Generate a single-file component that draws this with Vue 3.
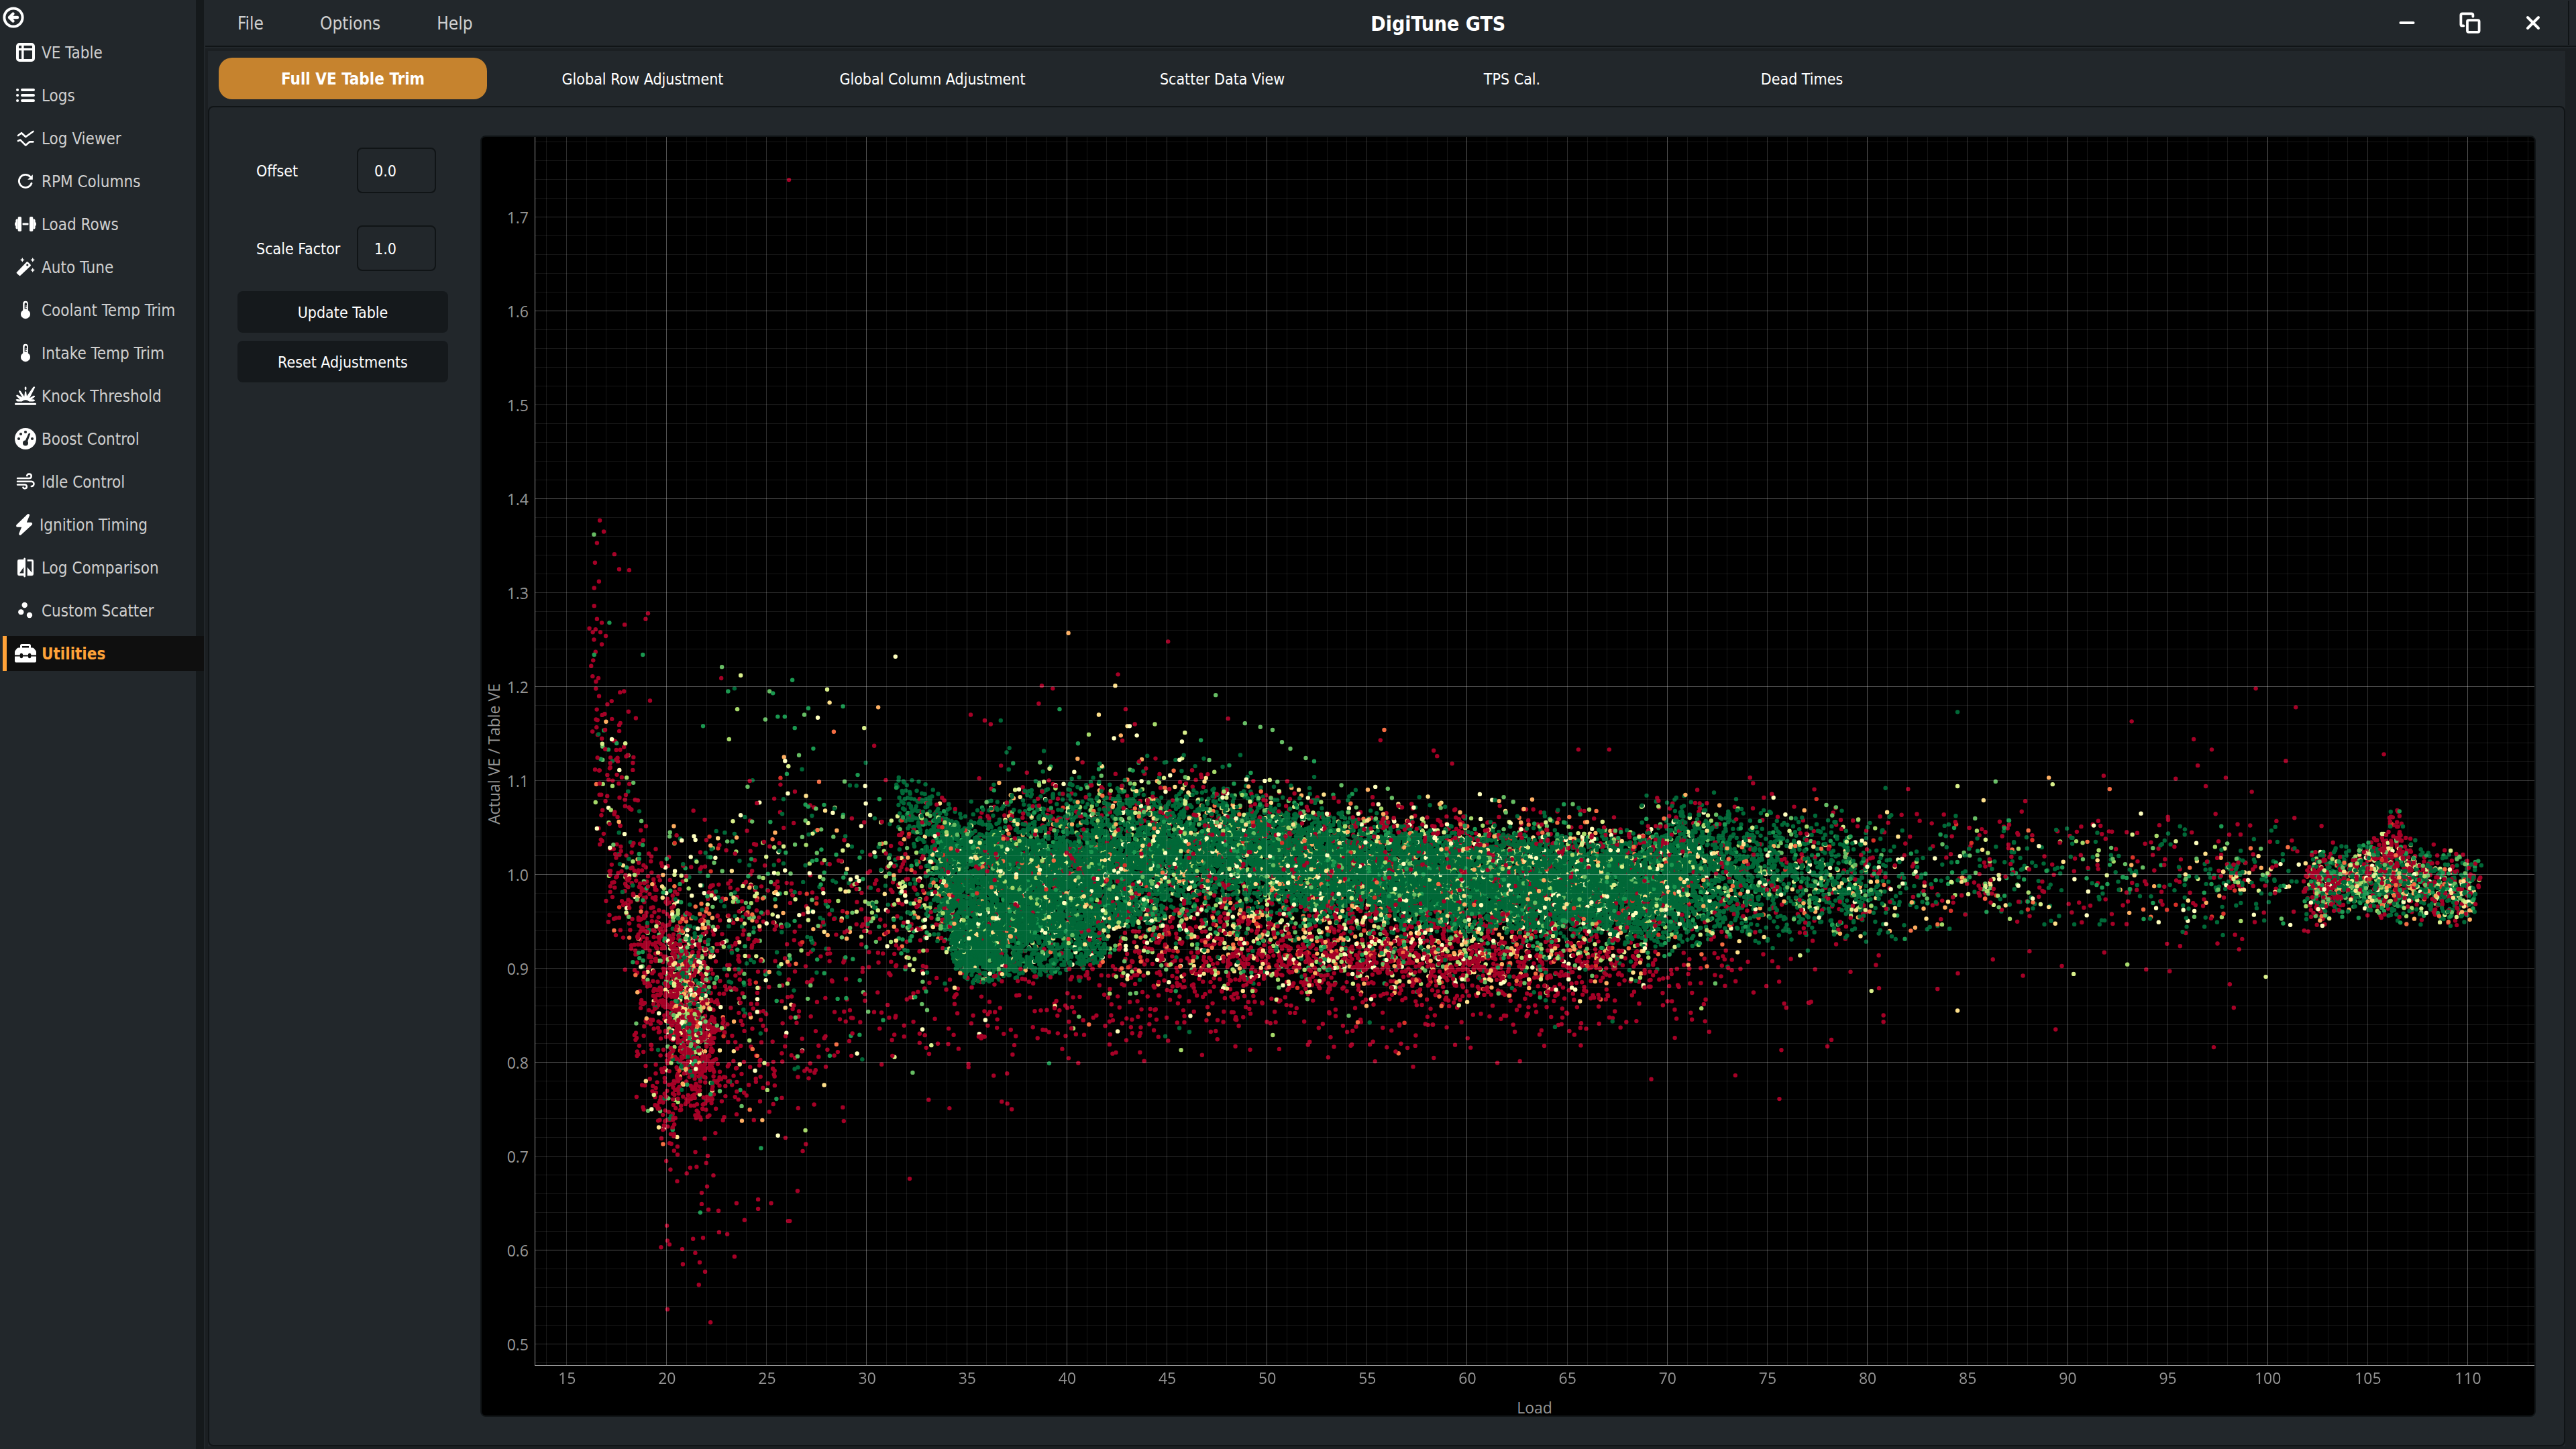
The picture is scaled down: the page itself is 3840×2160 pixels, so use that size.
<script setup>
import { onBeforeUnmount, onMounted, ref } from 'vue'

const navItems = [
  { id: 've', label: 'VE Table' },
  { id: 'logs', label: 'Logs' },
  { id: 'viewer', label: 'Log Viewer' },
  { id: 'rpm', label: 'RPM Columns' },
  { id: 'load', label: 'Load Rows' },
  { id: 'auto', label: 'Auto Tune' },
  { id: 'temp', label: 'Coolant Temp Trim' },
  { id: 'temp', label: 'Intake Temp Trim' },
  { id: 'knock', label: 'Knock Threshold' },
  { id: 'boost', label: 'Boost Control' },
  { id: 'idle', label: 'Idle Control' },
  { id: 'ignition', label: 'Ignition Timing' },
  { id: 'compare', label: 'Log Comparison' },
  { id: 'scatter', label: 'Custom Scatter' },
  { id: 'tools', label: 'Utilities' },
]
const activeNav = ref('Utilities')

const menus = ['File', 'Options', 'Help']
const tabs = [
  'Full VE Table Trim',
  'Global Row Adjustment',
  'Global Column Adjustment',
  'Scatter Data View',
  'TPS Cal.',
  'Dead Times',
]
const activeTab = ref(tabs[0])

const offset = ref('0.0')
const scaleFactor = ref('1.0')
function resetAdjustments() {
  offset.value = '0.0'
  scaleFactor.value = '1.0'
}

/* ---- axes ---- */
const X_MIN = 13.45
const X_MAX = 113.32
const Y_MIN = 0.4775
const Y_MAX = 1.7854
const px = (load) => ((load - X_MIN) / (X_MAX - X_MIN)) * 100
const py = (ve) => ((Y_MAX - ve) / (Y_MAX - Y_MIN)) * 100

const xTicks = Array.from({ length: 20 }, (_, i) => 15 + i * 5)
const yTicks = Array.from({ length: 13 }, (_, i) => (5 + i) / 10)

const xGrid = []
for (let v = 14; v <= 113; v++) {
  xGrid.push({ at: px(v), level: v % 10 === 0 ? 'major' : v % 5 === 0 ? 'mid' : 'minor' })
}
const yGrid = []
for (let v = 48; v <= 178; v += 2) {
  yGrid.push({ at: py(v / 100), level: v % 20 === 0 ? 'major' : v % 10 === 0 ? 'mid' : 'minor' })
}

/* ---- samples ---- */
const PALETTE = [
  '#a50026', '#d73027', '#f46d43', '#fdae61', '#fee08b', '#ffffbf',
  '#d9ef8b', '#a6d96a', '#66bd63', '#1a9850', '#006837',
]
const MIX = {
  red: [34, 0.2, 0.3, 0.4, 0.3, 0.3, 0.2, 0.3, 0.3, 0.4, 0.5],
  reddish: [24, 0.4, 0.6, 0.8, 0.7, 0.7, 0.6, 0.8, 1, 1.6, 1.4],
  warm: [14, 0.7, 1.1, 1.6, 1.6, 1.8, 1.2, 1.1, 1, 0.8, 1],
  mixed: [8, 0.5, 0.8, 1.1, 1.3, 2, 1.3, 1.5, 1.7, 2.2, 5],
  leafy: [3, 0.2, 0.4, 0.6, 0.9, 1.4, 1.7, 2.4, 3, 4, 6],
  half: [7, 0.3, 0.5, 0.7, 0.8, 0.8, 0.7, 0.9, 1, 2, 10],
  green: [0.7, 0.1, 0.15, 0.2, 0.4, 0.7, 0.3, 0.4, 0.6, 1.2, 36],
}

let seed = 20177
function random() {
  seed = (seed + 0x6d2b79f5) | 0
  let t = Math.imul(seed ^ (seed >>> 15), 1 | seed)
  t = (t + Math.imul(t ^ (t >>> 7), 61 | t)) ^ t
  return ((t ^ (t >>> 14)) >>> 0) / 4294967296
}
function pick(weights) {
  let r = random() * weights.reduce((a, b) => a + b, 0)
  for (let i = 0; i < weights.length; i++) {
    r -= weights[i]
    if (r <= 0) return i
  }
  return 0
}
const jitter = (size) => (random() + random() - 1) * size

// knots: [load, lowest VE, highest VE, density]; spread 1 is even, higher gathers to the middle,
// 'top' and 'bottom' gather to that edge
const LAYERS = [
  [42, 1, 'reddish', [[16.3, 1.08, 1.22, 1], [17, 1.08, 1.2, 1], [18.2, 1.06, 1.18, 0.8]]],
  [95, 1, 'reddish', [[16.4, 1.04, 1.18, 0.8], [17.3, 1.0, 1.17, 2], [18.4, 0.98, 1.13, 1.4], [19.2, 0.98, 1.06, 0.8]]],
  [310, 2, 'reddish', [[17, 0.93, 1.06, 0.3], [17.8, 0.9, 1.05, 1], [19, 0.84, 1.03, 2], [20.5, 0.82, 1.05, 2]]],
  [210, 1, 'red', [[18.4, 0.78, 0.92, 0.4], [19, 0.75, 0.93, 1], [20.5, 0.7, 0.95, 2]]],
  [620, 2, 'mixed', [[20.2, 0.78, 0.98, 1], [20.8, 0.77, 1.0, 3], [21.4, 0.76, 0.98, 3], [22.2, 0.8, 0.98, 0.6]]],
  [480, 2, 'red', [[20, 0.72, 0.98, 1], [20.7, 0.74, 0.95, 2], [21.5, 0.73, 0.91, 2.4], [22.6, 0.72, 0.9, 0.5]]],
  [100, 'top', 'red', [[19.5, 0.67, 0.76, 1], [21, 0.65, 0.76, 2], [24, 0.66, 0.8, 1], [29, 0.7, 0.82, 0.4]]],
  [400, 1, 'reddish', [[22, 0.77, 1.0, 1.6], [25, 0.77, 1.0, 1.2], [28, 0.8, 0.98, 0.7], [33, 0.8, 0.98, 0.6]]],
  [240, 2, 'mixed', [[20, 0.95, 1.08, 0.7], [24.5, 0.8, 1.12, 2], [26, 0.86, 1.14, 1], [28, 0.88, 1.12, 0.8]]],
  [130, 1, 'leafy', [[22, 0.88, 1.06, 0.6], [25, 0.88, 1.14, 1], [29, 0.94, 1.13, 1], [32, 0.95, 1.11, 0.8]]],
  [430, 2, 'mixed', [[27, 0.9, 1.08, 0.3], [30, 0.9, 1.09, 0.6], [32, 0.88, 1.09, 1.4], [34.5, 0.88, 1.08, 3]]],
  [230, 2, 'green', [[31.6, 1.05, 1.11, 0.6], [32.6, 1.01, 1.1, 1.6], [34.2, 0.99, 1.08, 2]]],
  [4300, 1, 'green', [[33.5, 0.96, 1.03, 0.6], [34.1, 0.93, 1.055, 3], [35, 0.895, 1.045, 4], [37, 0.93, 1.035, 4], [40, 0.94, 1.03, 3], [42, 0.945, 1.03, 1.6], [45, 0.95, 1.04, 0.8]]],
  [1150, 1, 'green', [[34.3, 0.91, 0.95, 2], [35, 0.888, 0.94, 3], [37, 0.892, 0.95, 2.4], [40, 0.897, 0.95, 2], [42, 0.91, 0.95, 1]]],
  [1350, 2, 'green', [[34, 1.0, 1.08, 0.8], [40, 0.99, 1.11, 2], [44, 0.97, 1.1, 2], [49, 0.98, 1.11, 2], [54, 0.98, 1.09, 1]]],
  [9800, 2, 'green', [[41, 0.95, 1.08, 0.9], [46, 0.96, 1.08, 1.5], [50, 0.955, 1.075, 2.4], [55, 0.945, 1.06, 3.4], [60, 0.935, 1.05, 3.6], [65, 0.93, 1.045, 3.8], [69, 0.925, 1.045, 3.2], [71, 0.925, 1.07, 1.4]]],
  [2500, 3, 'mixed', [[35, 0.87, 1.11, 0.6], [40, 0.87, 1.12, 1.1], [45, 0.86, 1.12, 1.5], [55, 0.87, 1.1, 1.5], [65, 0.87, 1.09, 1.3], [70, 0.88, 1.09, 0.9]]],
  [1450, 2, 'warm', [[42, 0.87, 0.98, 0.6], [48, 0.865, 0.985, 1.4], [56, 0.865, 0.97, 1.8], [64, 0.86, 0.96, 1.4], [69, 0.87, 0.96, 0.7]]],
  [760, 'top', 'red', [[33, 0.8, 0.9, 0.4], [40, 0.81, 0.9, 0.7], [50, 0.82, 0.92, 1.4], [60, 0.82, 0.92, 1.4], [66, 0.82, 0.91, 0.9], [74, 0.82, 0.92, 0.3]]],
  [100, 'top', 'red', [[31, 0.77, 0.84, 1], [50, 0.79, 0.84, 0.9], [68, 0.8, 0.85, 0.5]]],
  [620, 'bottom', 'warm', [[35, 1.05, 1.12, 0.4], [45, 1.05, 1.13, 0.8], [55, 1.03, 1.09, 1.2], [64, 1.02, 1.075, 1.4], [70, 1.03, 1.07, 0.6]]],
  [190, 'bottom', 'leafy', [[37, 1.06, 1.15, 1], [46, 1.07, 1.15, 1], [54, 1.04, 1.12, 0.6], [66, 1.03, 1.08, 0.5]]],
  [1500, 2, 'green', [[70, 0.92, 1.085, 3.4], [73, 0.92, 1.08, 2], [77, 0.92, 1.07, 1], [81, 0.93, 1.06, 0.4]]],
  [540, 2, 'mixed', [[69, 0.89, 1.1, 3], [73, 0.9, 1.1, 1.3], [80, 0.91, 1.09, 0.8]]],
  [620, 2, 'half', [[78, 0.92, 1.08, 2], [83, 0.92, 1.07, 1.5], [88, 0.93, 1.07, 1], [93, 0.93, 1.07, 1], [98, 0.93, 1.06, 1.2], [101.5, 0.94, 1.06, 1]]],
  [100, 2, 'mixed', [[79, 0.93, 1.06, 1], [90, 0.94, 1.05, 0.8], [101, 0.93, 1.05, 1.4]]],
  [26, 2, 'mixed', [[97.6, 0.98, 1.02, 1], [98.6, 0.98, 1.02, 1]]],
  [14, 2, 'warm', [[85.7, 0.978, 0.99, 1], [86.3, 0.98, 0.996, 1]]],
  [120, 2, 'reddish', [[101.8, 0.95, 1.03, 0.6], [102.6, 0.945, 1.03, 2], [103.6, 0.95, 1.03, 1]]],
  [1150, 2, 'half', [[101.9, 0.94, 1.02, 0.3], [102.7, 0.945, 1.035, 1.8], [104, 0.96, 1.03, 1.6], [106, 0.95, 1.04, 2.6], [107.5, 0.95, 1.035, 2], [109, 0.945, 1.03, 1.7], [110.1, 0.945, 1.03, 2], [110.5, 0.95, 1.02, 0.4]]],
  [210, 2, 'leafy', [[102.4, 0.955, 1.02, 1], [105.5, 0.95, 1.03, 2], [107.5, 0.95, 1.02, 1], [110.2, 0.945, 1.01, 1]]],
  [100, 2, 'red', [[104.8, 0.99, 1.03, 1], [106.2, 0.99, 1.06, 3], [107.3, 0.99, 1.03, 1]]],
  [34, 1, 'reddish', [[106, 1.03, 1.075, 1], [106.6, 1.03, 1.06, 1]]],
  [46, 1, 'red', [[70, 0.83, 0.92, 1.6], [80, 0.87, 0.92, 0.4], [104, 0.92, 0.95, 0.2]]],
  [34, 'bottom', 'red', [[70, 1.06, 1.1, 1], [90, 1.04, 1.08, 0.7], [104, 1.03, 1.07, 0.8]]],
]

// isolated readings, by palette index: load, VE, load, VE, ...
const OUTLIERS = {
  0: [
    16.67, 1.377, 16.87, 1.365, 16.53, 1.353, 16.43, 1.332, 17.4, 1.341, 17.64, 1.325, 18.14, 1.324,
    16.63, 1.312, 16.39, 1.305, 16.39, 1.286, 16.53, 1.272, 16.77, 1.268, 16.15, 1.262, 16.32, 1.258,
    16.46, 1.261, 16.7, 1.258, 16.97, 1.254, 16.38, 1.25, 16.77, 1.245, 16.46, 1.237, 16.34, 1.228,
    16.24, 1.222, 16.31, 1.211, 16.6, 1.209, 17.91, 1.266, 18.96, 1.272, 19.08, 1.278, 17.88, 1.195,
    19.18, 1.185, 22.74, 1.209, 30.38, 1.137, 26.12, 1.7396, 32.15, 0.676, 21.76, 0.661, 21.76, 0.649,
    22.1, 0.643, 22.6, 0.642, 23.5, 0.65, 24.58, 0.654, 24.58, 0.644, 25.23, 0.65, 26.55, 0.663,
    26.08, 0.631, 26.16, 0.631, 23.9, 0.632, 20.02, 0.626, 20.05, 0.61, 20.15, 0.606, 19.73, 0.603,
    20.79, 0.601, 21.33, 0.612, 21.83, 0.613, 22.63, 0.619, 23.04, 0.617, 21.44, 0.597, 21.66, 0.587,
    20.82, 0.585, 23.4, 0.593, 21.93, 0.577, 21.62, 0.563, 20.05, 0.537, 22.2, 0.523,
    45.06, 1.248, 42.56, 1.213, 38.75, 1.201, 39.3, 1.198, 38.6, 1.182, 42.94, 1.176, 48.06, 1.166,
    35.2, 1.17, 35.9, 1.164, 36.2, 1.16, 43.4, 1.16, 55.67, 1.143, 58.33, 1.132, 58.5, 1.126,
    59.25, 1.118, 65.56, 1.133, 67.1, 1.133, 71.5, 1.09, 37.25, 0.75, 37.03, 0.756, 36.75, 0.758,
    34.14, 0.751, 33.1, 0.76, 73.4, 0.786, 69.2, 0.782, 55.4, 0.801, 93.2, 1.163, 96.3, 1.144,
    97.2, 1.133, 96.5, 1.116, 99.4, 1.198, 101.4, 1.178, 100.9, 1.121, 105.8, 1.128, 91.8, 1.105,
    95.4, 1.102, 96.9, 1.094, 97.9, 1.103, 99.2, 1.088, 82.03, 1.091, 75.6, 0.761, 97.3, 0.816,
    89.4, 0.835, 98.3, 0.858, 98.1, 0.883, 80.8, 0.85, 80.8, 0.843, 95.1, 0.897, 83.5, 0.878,
    75.7, 0.813, 78, 0.817, 78.2, 0.824,
  ],
  2: [28.36, 1.152, 55.86, 1.154, 92.1, 1.091],
  3: [30.58, 1.178, 40.08, 1.257, 42.7, 1.148, 89.06, 1.103],
  4: [28.15, 1.183, 42.42, 1.201, 41.6, 1.17, 43.03, 1.158, 85.8, 1.079, 84.5, 0.855],
  5: [27.56, 1.167, 31.44, 1.232, 25.57, 0.722, 43.14, 1.158, 42.36, 1.145, 43.5, 1.148],
  6: [23.71, 1.212, 28.03, 1.197, 29.88, 1.156, 45.9, 1.151, 89.25, 1.096, 84.5, 1.094, 80.2, 0.876, 99.9, 0.891, 90.3, 0.894],
  7: [23.54, 1.176, 23.13, 1.144, 44.4, 1.16, 41.1, 1.149],
  8: [16.38, 1.362, 22.77, 1.221, 25.15, 1.195, 26.89, 1.17, 24.94, 1.165, 47.44, 1.191, 48.9, 1.161, 49.67, 1.157, 50.28, 1.154, 50.75, 1.141, 51.17, 1.134, 51.94, 1.124, 32.3, 0.789, 86.4, 1.099],
  9: [17.15, 1.268, 16.39, 1.234, 18.82, 1.234, 23.08, 1.195, 26.29, 1.207, 25.32, 1.193, 28.82, 1.179, 27.09, 1.177, 25.56, 1.168, 25.91, 1.168, 26.41, 1.156, 21.83, 1.158, 39.64, 1.176, 46.7, 1.143, 21.69, 0.64],
  10: [23.4, 1.198, 36.7, 1.164, 84.5, 1.173, 80.9, 1.092],
}

function buildSamples() {
  const samples = []
  for (const [count, spread, mix, knots] of LAYERS) {
    const peak = Math.max(...knots.map((k) => k[3]))
    const first = knots[0][0]
    const last = knots[knots.length - 1][0]
    let made = 0
    while (made < count) {
      const load = first + random() * (last - first)
      const i = Math.max(1, knots.findIndex((k) => k[0] >= load))
      const a = knots[i - 1]
      const b = knots[i]
      const t = (load - a[0]) / (b[0] - a[0])
      const at = (n) => a[n] + (b[n] - a[n]) * t
      if (random() * peak > at(3)) continue
      let u
      if (spread === 'top') u = Math.max(random(), random())
      else if (spread === 'bottom') u = Math.min(random(), random())
      else {
        u = 0
        for (let s = 0; s < spread; s++) u += random() / spread
      }
      const ve = at(1) + (at(2) - at(1)) * u
      samples.push([load + jitter(0.35), ve + jitter(0.01), pick(MIX[mix])])
      made++
    }
  }
  for (let i = samples.length - 1; i > 0; i--) {
    const j = Math.floor(random() * (i + 1))
    ;[samples[i], samples[j]] = [samples[j], samples[i]]
  }
  for (const [color, list] of Object.entries(OUTLIERS)) {
    for (let i = 0; i < list.length; i += 2) samples.push([list[i], list[i + 1], color])
  }
  return samples
}
const samples = buildSamples()

const canvas = ref(null)
let observer
function draw() {
  const el = canvas.value
  const w = (el.width = el.clientWidth)
  const h = (el.height = el.clientHeight)
  const ctx = el.getContext('2d')
  for (const [load, ve, color] of samples) {
    ctx.fillStyle = PALETTE[color]
    ctx.beginPath()
    ctx.arc((px(load) / 100) * w, (py(ve) / 100) * h, 3.2, 0, Math.PI * 2)
    ctx.fill()
  }
}
onMounted(() => {
  draw()
  observer = new ResizeObserver(draw)
  observer.observe(canvas.value)
})
onBeforeUnmount(() => observer.disconnect())
</script>

<template>
  <div class="app">
    <aside class="sidebar">
      <button class="collapse" type="button" aria-label="Collapse sidebar">
        <svg viewBox="0 0 32 32" class="icon line">
          <circle cx="16" cy="16" r="13.6" stroke-width="4" />
          <path d="M10 16H22M15.5 10.5L10 16L15.5 21.5" stroke-width="4.4" />
        </svg>
      </button>
      <nav class="nav">
        <a
          v-for="item in navItems"
          :key="item.label"
          href="#"
          class="nav-item"
          :class="{ active: item.label === activeNav }"
          @click.prevent="activeNav = item.label"
        >
          <svg v-if="item.id === 've'" viewBox="0 0 32 32" class="icon line">
            <rect x="4" y="4" width="24" height="24" rx="3" stroke-width="4" />
            <path d="M4 11.6H28M11.8 4V28" stroke-width="3.4" />
          </svg>
          <svg v-else-if="item.id === 'logs'" viewBox="0 0 32 32" class="icon line">
            <path d="M4 8H4.1M4 16H4.1M4 24H4.1M11 8H28M11 16H28M11 24H28" stroke-width="4" />
          </svg>
          <svg v-else-if="item.id === 'viewer'" viewBox="0 0 32 32" class="icon line">
            <path d="M5 12L10 8.2L16.3 14L27.4 6M5 20L8.3 18.6L16.3 26.6L22.3 21.3H27.4" stroke-width="2.7" />
          </svg>
          <svg v-else-if="item.id === 'rpm'" viewBox="0 0 32 32" class="icon line">
            <path d="M25 19.2A9.6 9.6 0 1 1 23.2 9.6" stroke-width="2.8" />
            <path class="solid" d="M26.8 6.2V13.8H19.2Z" />
          </svg>
          <svg v-else-if="item.id === 'load'" viewBox="0 0 32 32" class="icon">
            <rect x="4.7" y="5" width="5.3" height="22" rx="1.8" />
            <rect x="22" y="5" width="5.3" height="22" rx="1.8" />
            <path d="M4.7 8.6H3.4C2 8.6 1.4 9.6 1.4 11V13Q0 13.4 0 16Q0 18.6 1.4 19V21C1.4 22.4 2 23.4 3.4 23.4H4.7ZM27.3 8.6H28.6C30 8.6 30.6 9.6 30.6 11V13Q32 13.4 32 16Q32 18.6 30.6 19V21C30.6 22.4 30 23.4 28.6 23.4H27.3Z" />
            <rect x="11.5" y="14.6" width="9" height="2.8" rx="1" />
          </svg>
          <svg v-else-if="item.id === 'auto'" viewBox="0 0 32 32" class="icon">
            <path fill-rule="evenodd" d="M2.8 24L17.6 8.6Q18.6 7.8 19.6 8.6L23.6 12.6Q24.4 13.6 23.6 14.6L8.4 28.8Q7.4 29.6 6.4 28.6L2.8 25.2Q2.3 24.6 2.8 24ZM18.8 11.4A1.6 1.6 0 1 0 18.8 14.6A1.6 1.6 0 1 0 18.8 11.4Z" />
            <path d="M11.3 2L12.5 4.4L14.7 5.4L12.5 6.5L11.3 8.8L10.1 6.5L7.9 5.4L10.1 4.4ZM26.7 2L27.9 4.4L30.1 5.4L27.9 6.5L26.7 8.8L25.5 6.5L23.3 5.4L25.5 4.4ZM26.7 17.2L27.9 19.6L30.1 20.6L27.9 21.7L26.7 24L25.5 21.7L23.3 20.6L25.5 19.6Z" />
          </svg>
          <svg v-else-if="item.id === 'temp'" viewBox="0 0 32 32" class="icon">
            <path fill-rule="evenodd" d="M12.2 6.5A3.8 3.8 0 0 1 19.8 6.5V16.4A7 7 0 1 1 12.2 16.4ZM14.6 7V14.6H18V13.2H16V12H18V10.8H16V9.4H18V7A1.7 1.7 0 0 0 14.6 7Z" />
          </svg>
          <svg v-else-if="item.id === 'knock'" viewBox="0 0 32 32" class="icon">
            <rect x="0" y="26.8" width="32" height="3" rx="1.4" />
            <rect x="14.8" y="2.4" width="2.6" height="5" rx="1.3" />
            <path d="M1.6 21.4Q3.4 20.4 7.6 21.6L2.2 16.2Q2.2 14 4.4 14.8L11.2 18.4L6 9.4Q6.6 7 8.8 9L14.2 17L15.2 9.4H17L18 16.4L27.4 3Q29.4 1.4 30.2 3.4L22.2 19.2L28 15.8Q30.6 15.2 30 17.4L25 21.4Q29 21 30.2 22.4Q29.6 24.4 26 24.6H21.6Q16 20 10.6 24.6H6Q2 24.4 1.6 21.4Z" />
          </svg>
          <svg v-else-if="item.id === 'boost'" viewBox="0 0 32 32" class="icon">
            <circle cx="16" cy="16" r="16" />
            <g class="cut">
              <circle cx="16" cy="6" r="2.1" />
              <circle cx="9" cy="9" r="2.1" />
              <circle cx="6" cy="16" r="2.1" />
              <circle cx="26" cy="16" r="2.1" />
              <circle cx="16" cy="22.4" r="4" />
              <path d="M20.4 8.6Q22 7 23.2 8.8L19 20.4L15.6 19Z" />
            </g>
          </svg>
          <svg v-else-if="item.id === 'idle'" viewBox="0 0 32 32" class="icon line">
            <path d="M4 11H21.4A3.3 3.3 0 1 0 18.2 7.2M4 15.8H25A3.6 3.6 0 1 1 24.8 23M4 20.4H15A2.9 2.9 0 1 1 12.4 24.6" stroke-width="2.5" />
          </svg>
          <svg v-else-if="item.id === 'ignition'" viewBox="0 0 29 32" class="icon narrow">
            <path d="M18.4 1Q19.8-.6 21.4.6Q22.4 1.4 22 2.6L17.8 12.8H24.4Q27 13.6 25.8 16.2L10 30.8Q8.6 32.6 6.8 31.4Q5.8 30.4 6.4 29L10.2 19.8H3.8Q1.4 19.2 2.4 16.6Z" />
          </svg>
          <svg v-else-if="item.id === 'compare'" viewBox="0 0 32 32" class="icon">
            <path fill-rule="evenodd" d="M13.3 4V2.4Q14.7.4 16 2.4V29.6Q14.7 31.6 13.3 29.6V28.2H6.4Q4 28.2 4 25.8V6.4Q4 4 6.4 4ZM13.3 15.6L7 24.4H13.3Z" />
            <path fill-rule="evenodd" d="M18.7 4H25.6Q28 4 28 6.4V25.8Q28 28.2 25.6 28.2H18.7V15.6L25.3 23.6V6.8H18.7Z" />
          </svg>
          <svg v-else-if="item.id === 'scatter'" viewBox="0 0 32 32" class="icon">
            <circle cx="14.7" cy="8" r="4.2" />
            <circle cx="9.3" cy="18.4" r="4.2" />
            <circle cx="22" cy="23" r="4.2" />
          </svg>
          <svg v-else viewBox="0 0 32 32" class="icon">
            <path fill-rule="evenodd" d="M8 7.4V4.6Q8 2 10.6 2H21.4Q24 2 24 4.6V7.4H26Q27.6 7.4 28.6 8.6L31.2 11.8Q32 12.8 32 14V18.6H24.2V17Q22 14.6 20 17V18.6H12V17Q10 14.6 7.8 17V18.6H0V14Q0 12.8.8 11.8L3.4 8.6Q4.4 7.4 6 7.4ZM11 7.4H21V5H11Z" />
            <path d="M0 20.6H7.8V22Q10 24.6 12 22V20.6H20V22Q22 24.6 24.2 22V20.6H32V27Q32 29.6 29.4 29.6H2.6Q0 29.6 0 27Z" />
          </svg>
          <span>{{ item.label }}</span>
        </a>
      </nav>
    </aside>

    <div class="main">
      <header class="titlebar">
        <div class="menus">
          <button v-for="menu in menus" :key="menu" type="button" class="menu">{{ menu }}</button>
        </div>
        <h1 class="title">DigiTune GTS</h1>
        <div class="controls">
          <button type="button" class="control" aria-label="Minimize">
            <svg viewBox="0 0 32 32" class="icon line"><path d="M6.5 16H25.5" stroke-width="4" /></svg>
          </button>
          <button type="button" class="control" aria-label="Restore">
            <svg viewBox="0 0 32 32" class="icon line">
              <path d="M20.4 6.6V4.4Q20.4 2.4 18.4 2.4H4.4Q2.4 2.4 2.4 4.4V18.4Q2.4 20.4 4.4 20.4H6.4" stroke-width="3.8" />
              <rect x="12" y="12.2" width="17.6" height="17.6" rx="2" stroke-width="3.8" />
            </svg>
          </button>
          <button type="button" class="control" aria-label="Close">
            <svg viewBox="0 0 32 32" class="icon line"><path d="M8 8L24 24M24 8L8 24" stroke-width="4" /></svg>
          </button>
        </div>
      </header>

      <div class="content">
        <div class="tabs" role="tablist">
          <button
            v-for="tab in tabs"
            :key="tab"
            type="button"
            role="tab"
            class="tab"
            :class="{ active: tab === activeTab }"
            :aria-selected="tab === activeTab"
            @click="activeTab = tab"
          >{{ tab }}</button>
        </div>

        <section class="panel">
          <form class="form" @submit.prevent>
            <div class="fields">
              <div class="field">
                <label for="offset">Offset</label>
                <input id="offset" v-model="offset" type="text" />
              </div>
              <div class="field">
                <label for="scale-factor">Scale Factor</label>
                <input id="scale-factor" v-model="scaleFactor" type="text" />
              </div>
            </div>
            <button type="submit" class="action">Update Table</button>
            <button type="button" class="action" @click="resetAdjustments">Reset Adjustments</button>
          </form>

          <div class="chart">
            <div class="y-title"><span>Actual VE / Table VE</span></div>
            <div class="y-ticks">
              <span v-for="v in yTicks" :key="v" :style="{ top: py(v) + '%' }">{{ v.toFixed(1) }}</span>
            </div>
            <div class="plot">
              <canvas ref="canvas"></canvas>
              <svg class="grid" aria-hidden="true">
                <line v-for="g in xGrid" :key="'x' + g.at" :class="g.level" :x1="g.at + '%'" :x2="g.at + '%'" y1="0" y2="100%" />
                <line v-for="g in yGrid" :key="'y' + g.at" :class="g.level" :y1="g.at + '%'" :y2="g.at + '%'" x1="0" x2="100%" />
              </svg>
            </div>
            <div class="x-ticks">
              <span v-for="v in xTicks" :key="v" :style="{ left: px(v) + '%' }">{{ v }}</span>
            </div>
            <div class="x-title">Load</div>
          </div>
        </section>
      </div>
    </div>
  </div>
</template>

<style>
body {
  margin: 0;
  background: #22272b;
}
</style>

<style scoped>
.app {
  display: flex;
  min-height: 100vh;
  background: #22272b;
  color: #fff;
  font-family: "DejaVu Sans Condensed", "DejaVu Sans", sans-serif;
  font-size: 23px;
  line-height: 28px;
}
button,
input {
  font: inherit;
  color: inherit;
  margin: 0;
  padding: 0;
  border: 0;
  background: none;
  box-sizing: border-box;
}
.icon {
  display: block;
  flex: none;
  width: 32px;
  height: 32px;
  fill: #fff;
}
.icon.narrow {
  width: 29px;
}
.icon.line {
  fill: none;
  stroke: #fff;
  stroke-linecap: round;
  stroke-linejoin: round;
}
.icon .solid {
  fill: #fff;
  stroke: none;
}
.icon .cut {
  fill: #22272b;
}

/* sidebar */
.sidebar {
  flex: none;
  width: 304px;
  box-sizing: border-box;
  padding: 10px 0 0 4px;
  background: linear-gradient(to left, #15191b 12px, transparent 12px);
}
.collapse {
  display: block;
}
.nav {
  display: flex;
  flex-direction: column;
  gap: 12px;
  margin-top: 10px;
}
.nav-item {
  display: flex;
  align-items: center;
  gap: 8px;
  height: 52px;
  box-sizing: border-box;
  padding-left: 12px;
  border-left: 6px solid transparent;
  color: #cfcfcf;
  font-size: 24px;
  text-decoration: none;
  white-space: nowrap;
}
.nav-item span {
  padding-top: 2px;
}
.nav-item.active {
  border-left-color: #ffa238;
  background: #0f0f0f;
  color: #ffa238;
  font-weight: bold;
}

/* title bar */
.main {
  display: flex;
  flex: 1;
  flex-direction: column;
  min-width: 0;
  margin-left: 2px;
}
.titlebar {
  display: flex;
  align-items: center;
  height: 70px;
  box-sizing: border-box;
  padding-right: 10px;
  border-bottom: 2px solid #101416;
}
.menus {
  display: flex;
  gap: 84px;
  padding: 0 42px 0 48px;
  color: #cfcfcf;
}
.menu {
  padding-top: 2px;
  font-size: 26px;
}
.title {
  flex: 1;
  margin: 0;
  padding-top: 4px;
  font-size: 30px;
  line-height: 36px;
  font-weight: bold;
  text-align: center;
}
.controls {
  display: flex;
  padding-right: 5px;
  border-right: 2px solid #101416;
}
.control {
  display: flex;
  align-items: center;
  justify-content: center;
  width: 94px;
  height: 66px;
}

/* tabs and panel */
.content {
  display: flex;
  flex: 1;
  flex-direction: column;
  margin-top: 2px;
  border: solid #1b1f22;
  border-width: 4px 16px 4px 4px;
}
.tabs {
  display: flex;
  gap: 32px;
  padding: 10px 16px;
}
.tab {
  width: 400px;
  height: 62px;
  padding-top: 2px;
  border-radius: 20px;
}
.tab.active {
  background: #c6832e;
  font-size: 24px;
  font-weight: bold;
}
.panel {
  display: flex;
  flex: 1;
  gap: 48px;
  padding: 42px;
  border: 2px solid #101416;
  border-radius: 8px;
}
.form {
  display: flex;
  flex: none;
  flex-direction: column;
  gap: 12px;
  width: 314px;
}
.fields {
  display: flex;
  flex-direction: column;
  gap: 48px;
  padding: 18px 18px 18px 28px;
}
.field {
  display: flex;
  align-items: center;
  justify-content: space-between;
}
.field label {
  padding-top: 2px;
}
.field input {
  width: 118px;
  height: 68px;
  padding: 2px 24px 0;
  border: 2px solid #101416;
  border-radius: 8px;
}
.action {
  height: 62px;
  padding-top: 2px;
  border-radius: 8px;
  background: #15191c;
}

/* chart */
.chart {
  display: grid;
  flex: 1;
  grid-template: 1fr 36px 38px / 36px 43px 1fr;
  min-width: 0;
  border: 2px solid #101416;
  border-radius: 8px;
  background: #000;
  color: #969696;
  font-family: "Open Sans", "Noto Sans", sans-serif;
  overflow: hidden;
}
.y-title {
  display: flex;
  align-items: center;
  justify-content: center;
  padding-top: 8px;
}
.y-title span {
  writing-mode: vertical-rl;
  transform: rotate(180deg);
  white-space: nowrap;
}
.y-ticks,
.x-ticks,
.plot {
  position: relative;
}
.y-ticks span {
  position: absolute;
  right: 9px;
  transform: translateY(-50%);
}
.plot {
  border: solid #969696;
  border-width: 0 0 1px 1px;
}
.plot canvas,
.grid {
  position: absolute;
  inset: 0;
  width: 100%;
  height: 100%;
}
.grid line {
  stroke: #fff;
  stroke-width: 1px;
  shape-rendering: crispEdges;
}
.grid .major {
  stroke-opacity: 0.32;
}
.grid .mid {
  stroke-opacity: 0.18;
}
.grid .minor {
  stroke-opacity: 0.09;
}
.x-ticks {
  grid-column: 3;
  margin-left: 2px;
}
.x-ticks span {
  position: absolute;
  top: 4px;
  transform: translateX(-50%);
}
.x-title {
  grid-column: 3;
  align-self: end;
  line-height: 24px;
  text-align: center;
}
</style>
